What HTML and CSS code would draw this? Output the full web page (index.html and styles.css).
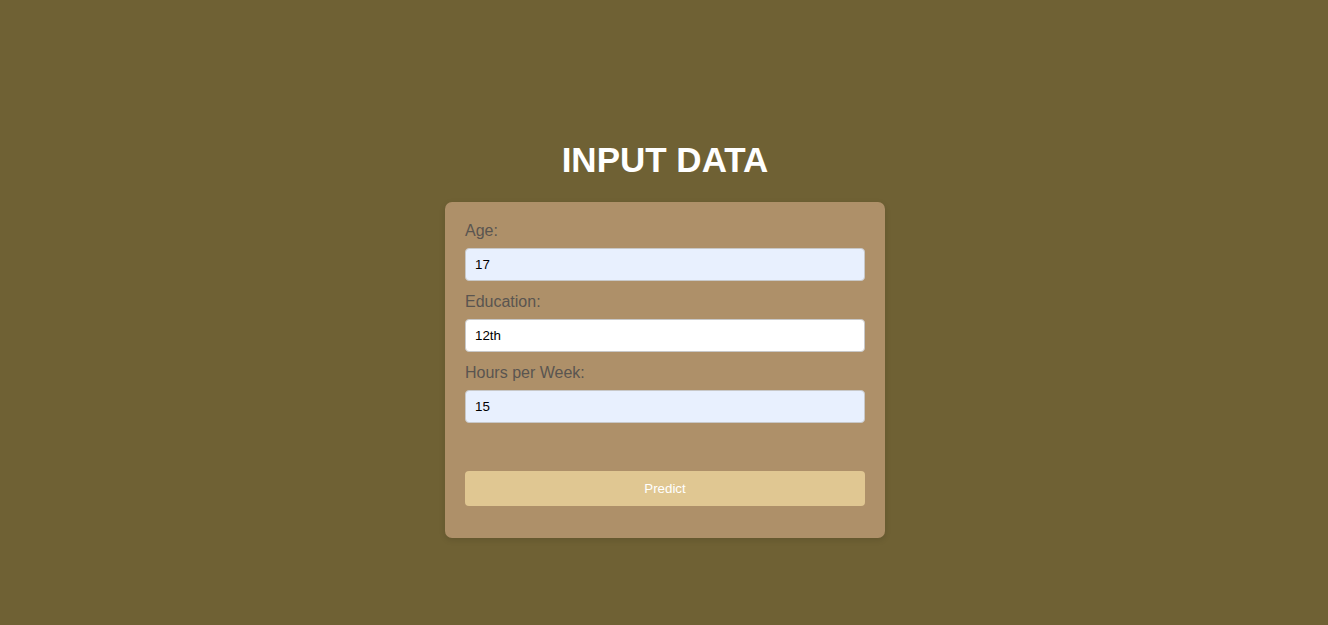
FILE: index.html
```html
<!DOCTYPE html>
<html>
<head>
<meta charset="utf-8">
<link rel="stylesheet" href="styles.css">
</head>
<body>
<main class="page">
  <h1 class="title">INPUT DATA</h1>
  <form class="card">
    <label class="label" for="age">Age:</label>
    <input class="field field-filled" id="age" type="text" value="17">
    <label class="label" for="edu">Education:</label>
    <input class="field" id="edu" type="text" value="12th">
    <label class="label" for="hours">Hours per Week:</label>
    <input class="field field-filled" id="hours" type="text" value="15">
    <button class="btn" type="button">Predict</button>
  </form>
</main>
</body>
</html>
```
FILE: styles.css
```css
html, body {
  margin: 0;
  padding: 0;
}
body {
  background: #6f6134;
  font-family: "Liberation Sans", Arial, sans-serif;
  height: 625px;
  overflow: hidden;
}
.page {
  display: flex;
  flex-direction: column;
  align-items: center;
  padding-top: 140px;
  padding-left: 2px;
}
.title {
  margin: 0 0 23px;
  font-size: 35px;
  font-weight: bold;
  color: #ffffff;
  line-height: 39px;
}
.card {
  width: 400px;
  padding: 20px 20px 32px;
  background: #ae9069;
  border-radius: 7px;
  box-shadow: 0 2px 6px rgba(0, 0, 0, 0.12);
  display: flex;
  flex-direction: column;
}
.label {
  display: block;
  font-size: 16px;
  line-height: 18px;
  color: #5a5550;
  margin-bottom: 8px;
}
.field {
  box-sizing: border-box;
  width: 400px;
  height: 33px;
  margin: 0 0 12px;
  padding: 0 9px;
  font-family: "Liberation Sans", Arial, sans-serif;
  font-size: 13.33px;
  color: #000;
  background: #ffffff;
  border: 1px solid #c8c8c8;
  border-radius: 4px;
  outline: none;
}
.field-filled {
  background: #e8f0fe;
}
.btn {
  margin-top: 36px;
  height: 35px;
  width: 400px;
  border: none;
  border-radius: 4px;
  background: #e0c792;
  color: #ffffff;
  font-family: "Liberation Sans", Arial, sans-serif;
  font-size: 13.33px;
  cursor: pointer;
}
```
